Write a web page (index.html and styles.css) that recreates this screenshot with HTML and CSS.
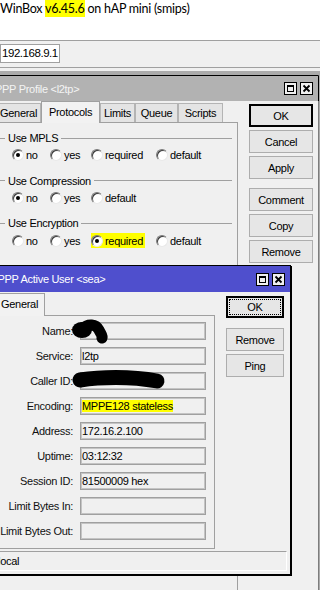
FILE: index.html
```html
<!DOCTYPE html>
<html lang="en">
<head>
<meta charset="utf-8">
<title>WinBox</title>
<link rel="stylesheet" href="styles.css">
</head>
<body>
<div class="screen">
  <header class="apptitle">WinBox <mark class="hl">v6.45.6</mark> on hAP mini (smips)</header>
  <div class="toolbar"><div class="addr">192.168.9.1</div></div>
  <div class="strip"></div>
  <div class="desktop">
    <section class="win w1">
      <div class="tbar">
        <span class="ttl">PPP Profile &lt;l2tp&gt;</span>
        <div class="tbtns">
          <svg class="tb" width="13" height="13" viewBox="0 0 13 13"><rect x="0.5" y="0.5" width="12" height="12" fill="#f0f0f0" stroke="#000"/><rect x="3.5" y="3.5" width="6" height="6" fill="none" stroke="#000"/><rect x="3" y="3" width="7" height="2" fill="#000"/></svg>
          <svg class="tb" width="13" height="13" viewBox="0 0 13 13"><rect x="0.5" y="0.5" width="12" height="12" fill="#f0f0f0" stroke="#000"/><path d="M3.5 3.5l6 6M9.5 3.5l-6 6" stroke="#000" stroke-width="1.8"/></svg>
        </div>
      </div>
      <div class="wbody">
        <div class="row">
          <div class="main">
            <div class="tabs">
              <div class="tab t-general">General</div>
              <div class="tab t-protocols active">Protocols</div>
              <div class="tab t-limits">Limits</div>
              <div class="tab t-queue">Queue</div>
              <div class="tab t-scripts">Scripts</div>
            </div>
            <div class="panel p1">
              <div class="group">
                <div class="ghead"><span>Use MPLS</span></div>
                <div class="radios">
                  <span class="rb"><i class="rd on"></i>no</span>
                  <span class="rb"><i class="rd"></i>yes</span>
                  <span class="rb"><i class="rd"></i>required</span>
                  <span class="rb"><i class="rd"></i>default</span>
                </div>
              </div>
              <div class="group">
                <div class="ghead"><span>Use Compression</span></div>
                <div class="radios">
                  <span class="rb"><i class="rd on"></i>no</span>
                  <span class="rb"><i class="rd"></i>yes</span>
                  <span class="rb"><i class="rd"></i>default</span>
                </div>
              </div>
              <div class="group">
                <div class="ghead"><span>Use Encryption</span></div>
                <div class="radios">
                  <span class="rb"><i class="rd"></i>no</span>
                  <span class="rb"><i class="rd"></i>yes</span>
                  <span class="rb marked"><i class="rd on"></i>required</span>
                  <span class="rb"><i class="rd"></i>default</span>
                </div>
              </div>
            </div>
          </div>
          <div class="btns b1">
            <div class="btn dflt">OK</div>
            <div class="btn">Cancel</div>
            <div class="btn">Apply</div>
            <div class="btn sep">Comment</div>
            <div class="btn">Copy</div>
            <div class="btn">Remove</div>
          </div>
        </div>
      </div>
    </section>

    <section class="win w2">
      <div class="tbar">
        <span class="ttl">PPP Active User &lt;sea&gt;</span>
        <div class="tbtns">
          <svg class="tb" width="13" height="13" viewBox="0 0 13 13"><rect x="0.5" y="0.5" width="12" height="12" fill="#f0f0f0" stroke="#000"/><rect x="3.5" y="3.5" width="6" height="6" fill="none" stroke="#000"/><rect x="3" y="3" width="7" height="2" fill="#000"/></svg>
          <svg class="tb" width="13" height="13" viewBox="0 0 13 13"><rect x="0.5" y="0.5" width="12" height="12" fill="#f0f0f0" stroke="#000"/><path d="M3.5 3.5l6 6M9.5 3.5l-6 6" stroke="#000" stroke-width="1.8"/></svg>
        </div>
      </div>
      <div class="wbody">
        <div class="row">
          <div class="main">
            <div class="tabs">
              <div class="tab t-gen2 active">General</div>
            </div>
            <div class="panel p2">
              <div class="lbl">Name:</div><div class="fld"></div>
              <div class="lbl">Service:</div><div class="fld">l2tp</div>
              <div class="lbl">Caller ID:</div><div class="fld"></div>
              <div class="lbl">Encoding:</div><div class="fld"><mark class="hl">MPPE128 stateless</mark></div>
              <div class="lbl">Address:</div><div class="fld">172.16.2.100</div>
              <div class="lbl">Uptime:</div><div class="fld">03:12:32</div>
              <div class="lbl">Session ID:</div><div class="fld">81500009 hex</div>
              <div class="lbl">Limit Bytes In:</div><div class="fld"></div>
              <div class="lbl">Limit Bytes Out:</div><div class="fld"></div>
            </div>
          </div>
          <div class="btns b2">
            <div class="btn dflt focus">OK</div>
            <div class="btn">Remove</div>
            <div class="btn">Ping</div>
          </div>
        </div>
        <div class="status">local</div>
      </div>
    </section>
  </div>

  <svg class="redact" width="320" height="590" viewBox="0 0 320 590">
    <ellipse cx="82" cy="330" rx="10" ry="8" fill="#000"/>
    <path d="M82 329 C 88 323, 96 324, 99 330 C 101 334, 103 336, 102 338" stroke="#000" stroke-width="11" stroke-linecap="round" fill="none"/>
    <path d="M80 380 C 100 377, 130 376, 157 381" stroke="#000" stroke-width="15" stroke-linecap="round" fill="none"/>
  </svg>
</div>
</body>
</html>
```
FILE: styles.css
```css
* { box-sizing: border-box; }
html, body { margin: 0; padding: 0; }
body {
  width: 320px;
  height: 590px;
  overflow: hidden;
  font-family: "Liberation Sans", Arial, sans-serif;
  font-size: 11px;
  letter-spacing: -0.3px;
  color: #000;
}
.screen {
  position: relative;
  width: 320px;
  height: 590px;
  display: flex;
  flex-direction: column;
  overflow: hidden;
  background: #ababab;
}
.apptitle {
  flex: none;
  height: 41px;
  background: #fff;
  border-bottom: 1px solid #a0a0a0;
  padding-top: 1px;
  font-family: Lato, "Liberation Sans", sans-serif;
  font-size: 12.5px;
  line-height: 16px;
  letter-spacing: -0.25px;
  white-space: nowrap;
}
.hl {
  background: #ffff00;
  color: inherit;
  padding: 1px 0;
}
.toolbar {
  flex: none;
  height: 27px;
  background: #f0f0f0;
  border-bottom: 1px solid #a0a0a0;
  padding-top: 3px;
}
.addr {
  width: 60px;
  height: 19px;
  background: #fff;
  border: 1px solid #a0a0a0;
  padding-left: 1px;
  font-size: 11.5px;
  letter-spacing: -0.45px;
  line-height: 17px;
  white-space: nowrap;
}
.strip {
  flex: none;
  height: 3px;
  background: #f0f0f0;
}
.desktop {
  position: relative;
  flex: 1;
}
.win {
  position: absolute;
  display: flex;
  flex-direction: column;
  background: #f0f0f0;
  border: 1px solid #000;
}
.w1 {
  left: -12px;
  top: 4px;
  width: 331px;
  height: 560px;
  border-color: #000 #7d7d7d #7d7d7d #000;
}
.w2 {
  left: -9px;
  top: 194px;
  width: 300px;
  height: 310px;
  box-shadow: 1px 1px 0 #000;
}
.tbar {
  flex: none;
  display: flex;
  align-items: center;
  height: 25px;
  padding: 0 5px 0 6px;
  white-space: nowrap;
}
.w1 .tbar {
  background: #b2b2b2;
  color: #f4f4f4;
  border-right: 1px solid #000;
  margin-right: -1px;
}
.w2 .tbar {
  height: 26px;
  background: #4f4fcd;
  color: #fff;
  padding-left: 5.5px;
}
.ttl { flex: 1; }
.tbtns {
  display: flex;
  gap: 3px;
}
.tb { display: block; }

.wbody {
  flex: 1;
  display: flex;
  flex-direction: column;
}
.row {
  display: flex;
  gap: 11px;
}
.w1 .row { padding-right: 5px; flex: 1; }
.w2 .wbody { padding: 1px 0 3px 0; }
.w2 .row { padding-right: 6px; }

.main {
  display: flex;
  flex-direction: column;
}
.w1 .main { width: 249px; }
.w2 .main { width: 223px; }

.tabs {
  flex: none;
  display: flex;
  align-items: flex-end;
  height: 21px;
  position: relative;
  z-index: 1;
}
.w2 .tabs { height: 22px; }
.tab {
  height: 19px;
  line-height: 18px;
  background: #e4e4e4;
  border: 1px solid #b4b4b4;
  border-bottom: none;
  text-align: center;
  white-space: nowrap;
}
.tab.active {
  height: 22px;
  line-height: 20px;
  margin-bottom: -1px;
  background: #f2f2f2;
  border-color: #a0a0a0;
}
.w2 .tab.active { height: 23px; line-height: 21px; }
.t-general { width: 52px; text-align: left; padding-left: 10px; }
.t-protocols { width: 59px; }
.t-limits { width: 35px; }
.t-queue { width: 43px; }
.t-scripts { width: 45px; }
.t-gen2 { width: 53px; text-align: left; padding-left: 8px; }

.panel {
  background: #f0f0f0;
  border: 1px solid #a0a0a0;
}
.p1 {
  flex: 1;
  padding-top: 9px;
}
.group + .group { margin-top: 12.5px; }
.ghead {
  display: flex;
  align-items: center;
  gap: 3px;
  height: 12px;
  padding-right: 5px;
  white-space: nowrap;
}
.ghead::before {
  content: "";
  width: 15px;
  border-top: 1px solid #a0a0a0;
}
.ghead::after {
  content: "";
  flex: 1;
  border-top: 1px solid #a0a0a0;
}
.radios {
  display: grid;
  grid-template-columns: 38px 41px 65px auto;
  align-items: center;
  height: 14px;
  margin-top: 4px;
  padding-left: 22px;
}
.rb {
  display: flex;
  align-items: center;
  gap: 2px;
  white-space: nowrap;
}
.rb.marked {
  width: max-content;
  height: 15px;
  padding-right: 2px;
  background: #ffff00;
}
.rd {
  position: relative;
  flex: none;
  width: 12px;
  height: 12px;
  border-radius: 50%;
  background: #fff;
  border: 1px solid;
  border-color: #7a7a7a #e8e8e8 #e8e8e8 #7a7a7a;
  box-shadow: inset 1px 1px 0 #3c3c3c;
}
.rd.on::after {
  content: "";
  position: absolute;
  left: 3px;
  top: 3px;
  width: 4px;
  height: 4px;
  border-radius: 50%;
  background: #000;
}

.btns {
  flex: none;
  display: flex;
  flex-direction: column;
}
.b1 {
  width: 64px;
  gap: 3px;
  padding-top: 3px;
}
.b1 .btn { height: 23px; }
.b1 .sep { margin-top: 6px; }
.b2 {
  width: 58px;
  gap: 3px;
  padding-top: 3px;
}
.b2 .btn { height: 23px; }
.b2 .focus { height: 22px; margin-bottom: 7px; }
.btn {
  display: flex;
  align-items: center;
  justify-content: center;
  background: #e6e6e6;
  border: 1px solid #adadad;
  white-space: nowrap;
}
.btn.dflt {
  border-color: #000;
  box-shadow: inset 0 0 0 1px #000;
}
.btn.focus {
  outline: 1px dotted #000;
  outline-offset: -4px;
}

.p2 {
  display: grid;
  grid-template-columns: 80px 126px;
  grid-auto-rows: 18px;
  column-gap: 7px;
  row-gap: 7px;
  padding: 6px 8px 8px 0;
}
.lbl {
  display: flex;
  align-items: center;
  justify-content: flex-end;
  white-space: nowrap;
  color: #111;
}
.fld {
  border: 1px solid #a0a0a0;
  box-shadow: inset 0 0 0 1px #c4c4c4;
  padding-left: 1px;
  line-height: 16px;
  white-space: nowrap;
  overflow: hidden;
}
.fld .hl { padding: 0; }

.status {
  height: 20px;
  margin: 2px 3px 0 0;
  padding-left: 5px;
  line-height: 18px;
  border: 1px solid;
  border-color: #a0a0a0 #fff #fff #a0a0a0;
  white-space: nowrap;
}

.redact {
  position: absolute;
  left: 0;
  top: 0;
  pointer-events: none;
}
```
